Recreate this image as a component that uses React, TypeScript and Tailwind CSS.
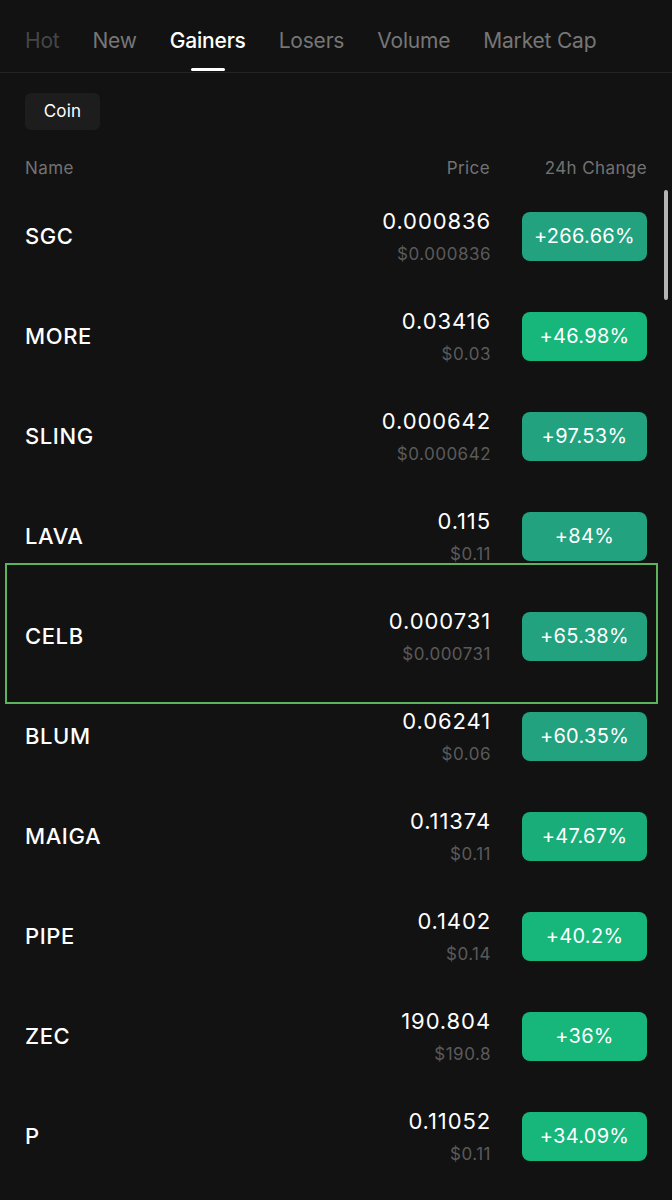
import React from "react";

type Row = { name: string; price: string; usd: string; change: string; color: string };

const TEAL = "bg-[#22a27e]";
const BRIGHT = "bg-[#17b67b]";
const MID = "bg-[#19ad7a]";

const rows: Row[] = [
  { name: "SGC", price: "0.000836", usd: "$0.000836", change: "+266.66%", color: TEAL },
  { name: "MORE", price: "0.03416", usd: "$0.03", change: "+46.98%", color: BRIGHT },
  { name: "SLING", price: "0.000642", usd: "$0.000642", change: "+97.53%", color: TEAL },
  { name: "LAVA", price: "0.115", usd: "$0.11", change: "+84%", color: TEAL },
  { name: "CELB", price: "0.000731", usd: "$0.000731", change: "+65.38%", color: TEAL },
  { name: "BLUM", price: "0.06241", usd: "$0.06", change: "+60.35%", color: TEAL },
  { name: "MAIGA", price: "0.11374", usd: "$0.11", change: "+47.67%", color: MID },
  { name: "PIPE", price: "0.1402", usd: "$0.14", change: "+40.2%", color: BRIGHT },
  { name: "ZEC", price: "190.804", usd: "$190.8", change: "+36%", color: BRIGHT },
  { name: "P", price: "0.11052", usd: "$0.11", change: "+34.09%", color: BRIGHT },
];

const tabs = ["Hot", "New", "Gainers", "Losers", "Volume", "Market Cap"];

export default function App() {
  return (
    <div
      className="relative w-[672px] h-[1200px] overflow-hidden bg-[#121212] text-white"
      style={{ fontFamily: "Inter, 'Liberation Sans', sans-serif" }}
    >
      {/* Tabs */}
      <div className="h-[73px] border-b border-[#242424] flex items-start pl-[25px] gap-[33px]">
        {tabs.map((t) => {
          const active = t === "Gainers";
          return (
            <div key={t} className="relative h-[72px] flex items-start">
              <span
                className={
                  "mt-[27px] text-[21px] leading-[28px] tracking-[-0.2px] " +
                  (active
                    ? "text-white font-medium"
                    : t === "Hot"
                    ? "text-[#464646]"
                    : "text-[#767676]")
                }
              >
                {t}
              </span>
              {active && (
                <div className="absolute left-1/2 -translate-x-1/2 bottom-[1px] w-[34px] h-[3px] rounded-full bg-white" />
              )}
            </div>
          );
        })}
      </div>

      {/* Coin chip */}
      <div className="pl-[25px] mt-[20px]">
        <div className="inline-flex items-center justify-center w-[75px] h-[37px] rounded-[6px] bg-[#1d1d1d] text-[17px] text-white tracking-[0.2px]">
          Coin
        </div>
      </div>

      {/* Header */}
      <div className="mt-[28px] h-[22px] px-[25px] flex items-center text-[17px] tracking-[0.4px] text-[#727272]">
        <div className="flex-1">Name</div>
        <div className="w-[120px] text-right">Price</div>
        <div className="w-[157px] text-right">24h Change</div>
      </div>

      {/* Rows */}
      <div className="mt-[6px]">
        {rows.map((r) => (
          <div key={r.name} className="h-[100px] px-[25px] flex items-center">
            <div className="flex-1 text-[22px] font-medium leading-[28px] tracking-[0.6px]">{r.name}</div>
            <div className="flex flex-col items-end">
              <div className="text-[22px] leading-[26px] text-white tracking-[0.9px] -mr-[1px]">{r.price}</div>
              <div className="mt-[9px] text-[17px] leading-[22px] text-[#5a5a5a] tracking-[0.5px] -mr-[1px]">{r.usd}</div>
            </div>
            <div
              className={
                "ml-[32px] w-[125px] h-[49px] rounded-[8px] flex items-center justify-center text-[20px] tracking-[0.3px] text-white " +
                r.color
              }
            >
              {r.change}
            </div>
          </div>
        ))}
      </div>

      {/* Scrollbar */}
      <div className="absolute left-[664px] top-[190px] w-[4px] h-[110px] rounded-full bg-[#b5b5b5]" />

      {/* Highlight box */}
      <div className="absolute left-[5px] top-[563px] w-[653px] h-[141px] border-[2px] border-[#5fb25c]" />
    </div>
  );
}
